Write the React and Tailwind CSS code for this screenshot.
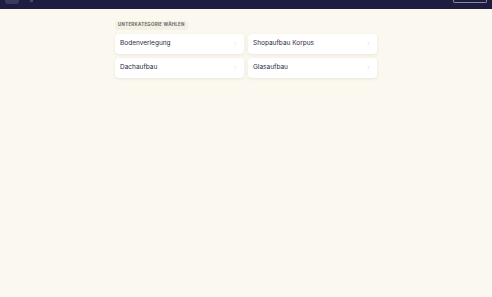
import { ChevronRight } from "lucide-react";

const items = ["Bodenverlegung", "Shopaufbau Korpus", "Dachaufbau", "Glasaufbau"];

export default function App() {
  return (
    <div className="min-h-[297px] bg-[#fbf8ef] font-['Inter',sans-serif] text-[#2a2a3c]">
      <header className="flex h-[9px] items-start justify-between bg-[#1e1d40] px-[5px]">
        <div className="flex items-start gap-[11px]">
          <div className="h-[4px] w-[14px] rounded-b-[3px] bg-[#3b3a5e]" />
          <div className="h-[2px] w-[3px] bg-[#4a4970]" />
        </div>
        <div className="h-[3px] w-[34px] rounded-b-[2px] border-x border-b border-[#8a89a8]" />
      </header>
      <main className="mx-auto flex w-[262px] flex-col items-start gap-[4px] pt-[12px]">
        <div className="rounded-[3px] bg-[#f4f0e4] px-[3px] py-[2px] text-[4.5px] font-bold uppercase leading-none tracking-[0.05em] text-[#6d6b70]">
          Unterkategorie wählen
        </div>
        <div className="grid w-full grid-cols-2 gap-[4px]">
          {items.map((t) => (
            <div
              key={t}
              className="flex h-[20px] items-center justify-between rounded-[4px] bg-white pl-[5px] pr-[6px] shadow-[0_1px_3px_rgba(120,100,60,0.12)]"
            >
              <span className="text-[6.5px] leading-none">{t}</span>
              <ChevronRight className="h-[5px] w-[5px] text-[#c4c2c8]" strokeWidth={2} />
            </div>
          ))}
        </div>
      </main>
    </div>
  );
}
